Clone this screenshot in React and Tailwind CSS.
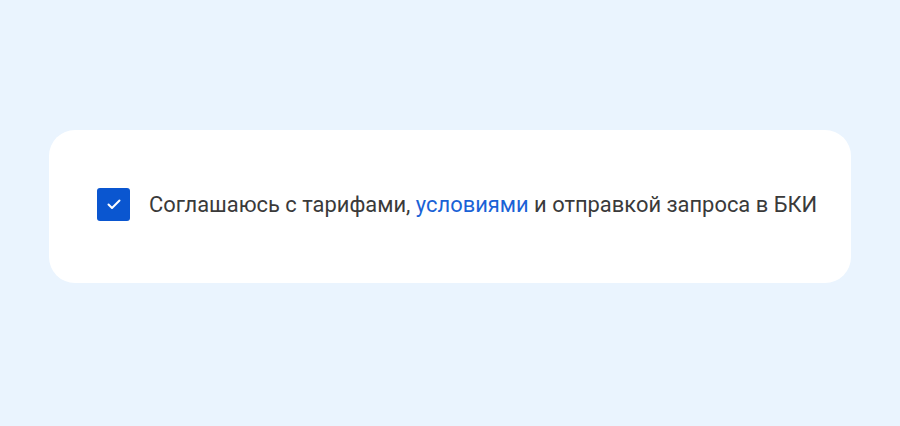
const App = () => {
  return (
    <div className="min-h-[426px] bg-[#eaf4fe] px-[49px] pt-[130px] font-['Roboto',sans-serif]">
      <div className="flex h-[153px] items-center rounded-[26px] bg-white pl-[48px] pr-[24px] pb-[4px]">
        <label className="flex items-center gap-[19px]">
          <span className="flex h-[33px] w-[33px] shrink-0 items-center justify-center rounded-[3px] bg-[#0a56d0]">
            <svg width="14" height="11" viewBox="0 0 14 11" fill="none">
              <path d="M1.5 5.5L5 9L12.5 1.5" stroke="white" strokeWidth="2" strokeLinecap="round" strokeLinejoin="round" />
            </svg>
          </span>
          <span className="whitespace-nowrap text-[21.9px] leading-[30px] text-[#3a3a3a]">
            Соглашаюсь с тарифами, <a className="text-[#1a62d6]">условиями</a> и отправкой запроса в БКИ
          </span>
        </label>
      </div>
    </div>
  );
};

export default App;
